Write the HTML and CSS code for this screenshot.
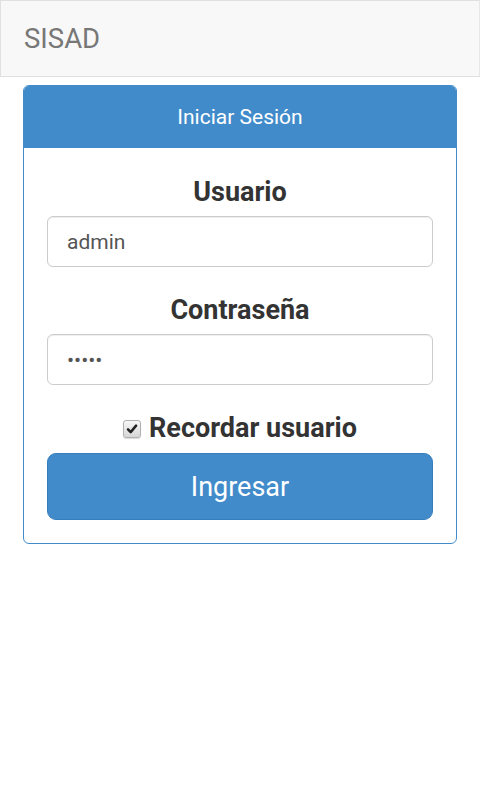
FILE: index.html
```html
<!DOCTYPE html>
<html lang="es">
<head>
<meta charset="utf-8">
<title>SISAD</title>
<link rel="stylesheet" href="styles.css">
</head>
<body>
<nav class="navbar">
  <span class="brand">SISAD</span>
</nav>
<div class="panel">
  <div class="panel-heading">Iniciar Sesión</div>
  <form class="panel-body">
    <div class="form-group">
      <label class="field-label" for="usuario">Usuario</label>
      <input class="form-control" id="usuario" type="text" value="admin">
    </div>
    <div class="form-group">
      <label class="field-label" for="clave">Contraseña</label>
      <input class="form-control" id="clave" type="password" value="admin">
    </div>
    <div class="check-row">
      <span class="check-box"><svg viewBox="0 0 18 18" width="18" height="18"><path d="M5 9.3 L7.7 12.1 L13.1 5.6" fill="none" stroke="#222" stroke-width="2.5" stroke-linecap="round" stroke-linejoin="round"/></svg></span>
      <span class="check-label">Recordar usuario</span>
    </div>
    <button class="btn" type="button">Ingresar</button>
  </form>
</div>
</body>
</html>
```
FILE: styles.css
```css
* { box-sizing: border-box; }
html, body { margin: 0; padding: 0; background: #fff; }
body { font-family: Roboto, "Liberation Sans", sans-serif; color: #333; }

.navbar {
  height: 77px;
  background: #f8f8f8;
  border: 1px solid #e0e0e0;
  border-right-color: #e7e7e7;
  display: flex;
  align-items: center;
  padding-left: 23px;
}
.brand { font-size: 27.5px; color: #777; line-height: 1; }

.panel {
  margin: 8px 23px 0;
  border: 1px solid #428bca;
  border-radius: 6px;
  overflow: hidden;
  background: #fff;
}
.panel-heading {
  height: 62px;
  background: #428bca;
  color: #fff;
  font-size: 21px;
  display: flex;
  align-items: center;
  justify-content: center;
}
.panel-body {
  margin: 0;
  padding: 25px 23px 23px;
}
.form-group { margin-bottom: 24px; }
.field-label {
  display: block;
  text-align: center;
  font-weight: bold;
  font-size: 27px;
  line-height: 38px;
  margin-bottom: 5px;
}
.form-control {
  display: block;
  width: 100%;
  height: 51px;
  padding: 0 19px;
  border: 1px solid #ccc;
  border-radius: 6px;
  box-shadow: inset 0 1px 1px rgba(0,0,0,0.075);
  font-family: Roboto, "Liberation Sans", sans-serif;
  font-size: 21px;
  color: #555;
  background: #fff;
  outline: none;
}
.check-row {
  display: flex;
  align-items: center;
  justify-content: center;
  height: 38px;
  gap: 8px;
  margin-bottom: 6px;
}
.check-box {
  width: 18px;
  height: 18px;
  border: 1px solid #b0b0b0;
  border-radius: 3px;
  background: linear-gradient(#f6f6f6, #d6d6d6);
  box-shadow: 0 1px 1px rgba(0,0,0,0.15);
  display: flex;
  align-items: center;
  justify-content: center;
  margin-top: 1px;
}
.check-box svg { display: block; margin: -1px; }
.check-label { font-weight: bold; font-size: 27px; line-height: 38px; }
.btn {
  display: block;
  width: 100%;
  height: 67px;
  background: #428bca;
  border: 1px solid #357ebd;
  border-radius: 9px;
  color: #fff;
  font-family: Roboto, "Liberation Sans", sans-serif;
  font-size: 27px;
  padding: 0;
}
```
